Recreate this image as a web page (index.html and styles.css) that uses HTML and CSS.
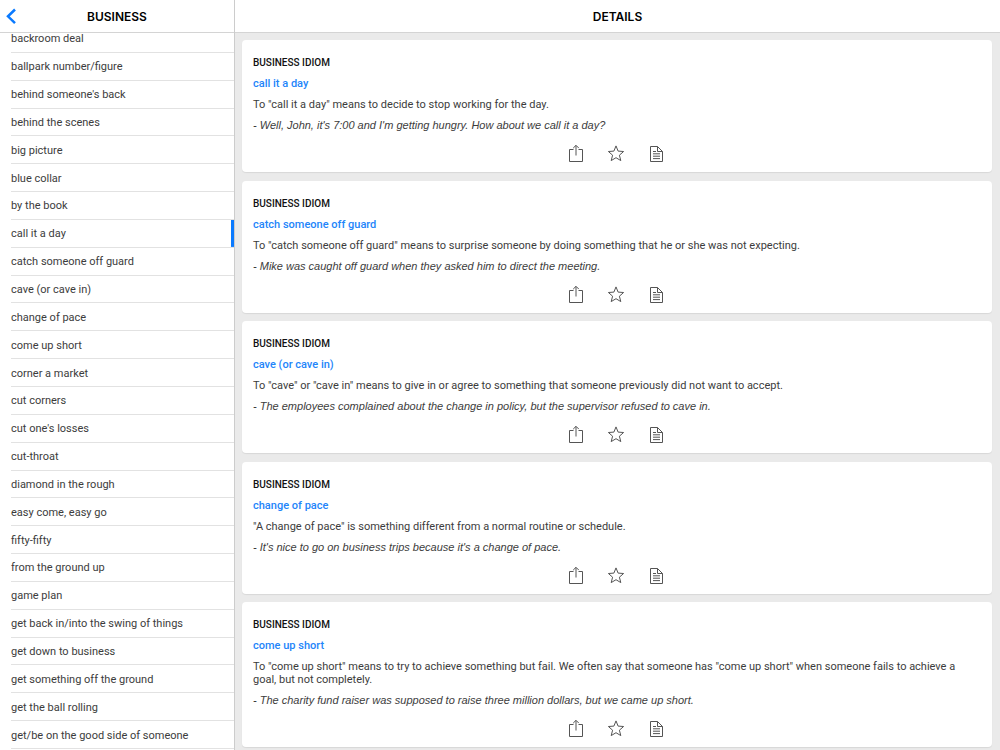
FILE: index.html
```html
<!DOCTYPE html>
<html lang="en">
<head>
    <meta charset="UTF-8">
    <meta name="viewport" content="width=device-width, initial-scale=1.0">
    <title>Business Idioms</title>
    <link rel="stylesheet" href="styles.css">
</head>
<body>

    <!-- Shared icons -->
    <svg class="icon-defs" aria-hidden="true">
        <symbol id="icon-share" viewBox="0 0 18 18">
            <path d="M5.5 5.5h-4v12h13v-12h-4M8 11.5V1.5M5.2 4.1 8 1.3l2.8 2.8"/>
        </symbol>
        <symbol id="icon-star" viewBox="0 0 18 18">
            <path d="M8 1.9l2.1 5.2 5.5.4-4.2 3.7 1.4 5.4L8 13.7l-4.8 2.9 1.4-5.4L.4 7.5l5.5-.4z"/>
        </symbol>
        <symbol id="icon-note" viewBox="0 0 18 18">
            <path d="M2.5 2.5h7l5 5v10h-12zM9.5 2.5v5h5M5 7.5h3M5 9.8h7M5 12.2h7M5 14.6h7"/>
        </symbol>
    </svg>

    <div class="app">
        <!-- Idiom list -->
        <nav class="sidebar">
            <header class="bar">
                <button class="back" aria-label="Back">
                    <svg width="12" height="18" viewBox="0 0 12 18"><path d="M10 2.5 3 9.3l7 6.8"/></svg>
                </button>
                <h1>BUSINESS</h1>
            </header>
            <ul class="idioms">
                <li><a href="#">backroom deal</a></li>
                <li><a href="#">ballpark number/figure</a></li>
                <li><a href="#">behind someone's back</a></li>
                <li><a href="#">behind the scenes</a></li>
                <li><a href="#">big picture</a></li>
                <li><a href="#">blue collar</a></li>
                <li><a href="#">by the book</a></li>
                <li class="selected"><a href="#">call it a day</a></li>
                <li><a href="#">catch someone off guard</a></li>
                <li><a href="#">cave (or cave in)</a></li>
                <li><a href="#">change of pace</a></li>
                <li><a href="#">come up short</a></li>
                <li><a href="#">corner a market</a></li>
                <li><a href="#">cut corners</a></li>
                <li><a href="#">cut one's losses</a></li>
                <li><a href="#">cut-throat</a></li>
                <li><a href="#">diamond in the rough</a></li>
                <li><a href="#">easy come, easy go</a></li>
                <li><a href="#">fifty-fifty</a></li>
                <li><a href="#">from the ground up</a></li>
                <li><a href="#">game plan</a></li>
                <li><a href="#">get back in/into the swing of things</a></li>
                <li><a href="#">get down to business</a></li>
                <li><a href="#">get something off the ground</a></li>
                <li><a href="#">get the ball rolling</a></li>
                <li><a href="#">get/be on the good side of someone</a></li>
            </ul>
        </nav>

        <!-- Idiom details -->
        <main class="details">
            <header class="bar">
                <h1>DETAILS</h1>
            </header>
            <div class="cards">
                <article class="card">
                    <h2>BUSINESS IDIOM</h2>
                    <h3>call it a day</h3>
                    <p>To "call it a day" means to decide to stop working for the day.</p>
                    <p class="example">- Well, John, it's 7:00 and I'm getting hungry. How about we call it a day?</p>
                    <div class="actions">
                        <button aria-label="Share"><svg><use href="#icon-share"/></svg></button>
                        <button aria-label="Favorite"><svg><use href="#icon-star"/></svg></button>
                        <button aria-label="Notes"><svg><use href="#icon-note"/></svg></button>
                    </div>
                </article>

                <article class="card">
                    <h2>BUSINESS IDIOM</h2>
                    <h3>catch someone off guard</h3>
                    <p>To "catch someone off guard" means to surprise someone by doing something that he or she was not expecting.</p>
                    <p class="example">- Mike was caught off guard when they asked him to direct the meeting.</p>
                    <div class="actions">
                        <button aria-label="Share"><svg><use href="#icon-share"/></svg></button>
                        <button aria-label="Favorite"><svg><use href="#icon-star"/></svg></button>
                        <button aria-label="Notes"><svg><use href="#icon-note"/></svg></button>
                    </div>
                </article>

                <article class="card">
                    <h2>BUSINESS IDIOM</h2>
                    <h3>cave (or cave in)</h3>
                    <p>To "cave" or "cave in" means to give in or agree to something that someone previously did not want to accept.</p>
                    <p class="example">- The employees complained about the change in policy, but the supervisor refused to cave in.</p>
                    <div class="actions">
                        <button aria-label="Share"><svg><use href="#icon-share"/></svg></button>
                        <button aria-label="Favorite"><svg><use href="#icon-star"/></svg></button>
                        <button aria-label="Notes"><svg><use href="#icon-note"/></svg></button>
                    </div>
                </article>

                <article class="card">
                    <h2>BUSINESS IDIOM</h2>
                    <h3>change of pace</h3>
                    <p>"A change of pace" is something different from a normal routine or schedule.</p>
                    <p class="example">- It's nice to go on business trips because it's a change of pace.</p>
                    <div class="actions">
                        <button aria-label="Share"><svg><use href="#icon-share"/></svg></button>
                        <button aria-label="Favorite"><svg><use href="#icon-star"/></svg></button>
                        <button aria-label="Notes"><svg><use href="#icon-note"/></svg></button>
                    </div>
                </article>

                <article class="card">
                    <h2>BUSINESS IDIOM</h2>
                    <h3>come up short</h3>
                    <p>To "come up short" means to try to achieve something but fail. We often say that someone has "come up short" when someone fails to achieve a goal, but not completely.</p>
                    <p class="example">- The charity fund raiser was supposed to raise three million dollars, but we came up short.</p>
                    <div class="actions">
                        <button aria-label="Share"><svg><use href="#icon-share"/></svg></button>
                        <button aria-label="Favorite"><svg><use href="#icon-star"/></svg></button>
                        <button aria-label="Notes"><svg><use href="#icon-note"/></svg></button>
                    </div>
                </article>
            </div>
        </main>
    </div>

</body>
</html>
```

FILE: styles.css
```css
* {
    box-sizing: border-box;
}
body {
    margin: 0;
    font-family: Roboto, "Liberation Sans", sans-serif;
    font-size: 11px;
    line-height: 13px;
    color: #3c3c3c;
}
h1, h2, h3, p, ul {
    margin: 0;
    padding: 0;
}
button {
    padding: 0;
    border: 0;
    background: none;
    cursor: pointer;
}
.icon-defs {
    display: none;
}
.app {
    display: flex;
    height: 100vh;
    overflow: hidden;
}
.bar {
    display: grid;
    grid-template-columns: 24px 1fr 24px;
    align-items: center;
    flex: none;
    height: 33px;
    background-color: #fff;
    border-bottom: 1px solid #d4d4d4;
    z-index: 1;
}
.bar h1 {
    grid-column: 2;
    padding-top: 2px;
    font-family: Inter, "Liberation Sans", sans-serif;
    font-size: 12px;
    line-height: 16px;
    font-weight: 600;
    color: #000;
    text-align: center;
}
.back {
    display: flex;
    grid-column: 1;
    padding-left: 5px;
}
.back svg {
    fill: none;
    stroke: #0a7aff;
    stroke-width: 2.5;
}

/* Idiom list */
.sidebar {
    display: flex;
    flex-direction: column;
    flex: none;
    width: 235px;
    border-right: 1px solid #ccc;
    background-color: #fff;
}
.idioms {
    display: flex;
    flex-direction: column;
    flex: 1;
    margin-top: -8px;
    margin-bottom: 1px;
    padding-left: 11px;
    list-style: none;
}
.idioms li {
    display: flex;
    flex: 1;
    align-items: center;
    padding-top: 1px;
    border-bottom: 1px solid #e2e2e2;
}
.idioms a {
    flex: 1;
    color: inherit;
    text-decoration: none;
}
.idioms .selected {
    background: linear-gradient(#0a7aff, #0a7aff) right / 3px 100% no-repeat;
}

/* Details */
.details {
    display: flex;
    flex-direction: column;
    flex: 1;
    background-color: #eaeaea;
}
.cards {
    display: flex;
    flex-direction: column;
    flex: 1;
    justify-content: space-between;
    gap: 8px;
    padding: 7px 8px 3px 7px;
}
.card {
    display: flex;
    flex-direction: column;
    gap: 8px;
    padding: 16px 11px 10px;
    background-color: #fff;
    border-radius: 4px;
    box-shadow: 0 1px 1px rgba(0, 0, 0, 0.08);
}
.card h2 {
    font-size: 10px;
    line-height: 13px;
    font-weight: 500;
    color: #111;
}
.card h3 {
    font-size: 11px;
    font-weight: 500;
    color: #2385fa;
}
.card p {
    padding-right: 11px;
}
.example {
    font-family: "Liberation Sans", Arial, sans-serif;
    font-style: italic;
}
.actions {
    display: flex;
    justify-content: center;
    gap: 22px;
    margin-top: 4px;
}
.actions button {
    display: flex;
}
.actions svg {
    width: 18px;
    height: 18px;
    fill: none;
    stroke: #555;
    stroke-width: 1;
}
```
